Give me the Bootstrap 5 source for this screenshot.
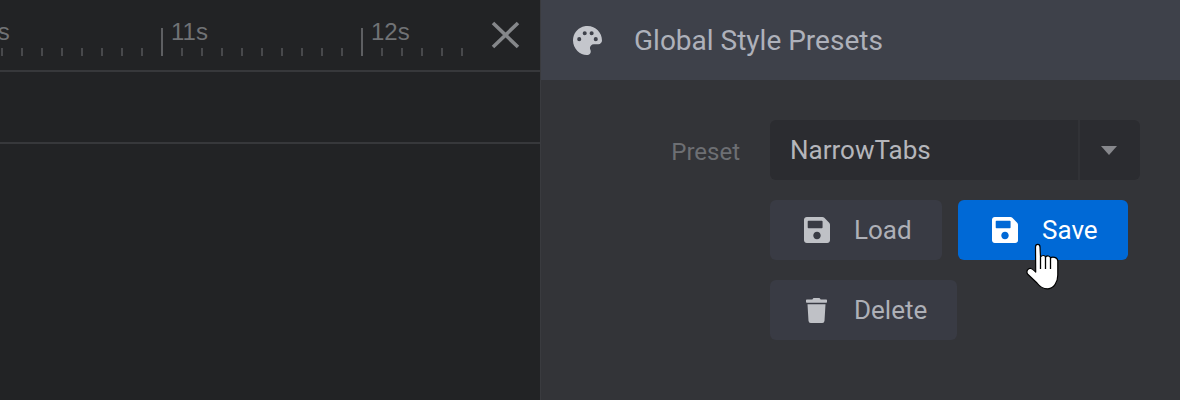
<!DOCTYPE html>
<html lang="en">
<head>
<meta charset="utf-8">
<title>Global Style Presets</title>
<link href="https://cdn.jsdelivr.net/npm/bootstrap@5.3.0/dist/css/bootstrap.min.css" rel="stylesheet">
<style>
html,body{margin:0;height:400px;overflow:hidden;background:#222325;font-family:Roboto,"Liberation Sans",sans-serif}
.stage{width:1180px;height:400px;position:relative;overflow:hidden}
.timeline{width:540px;height:400px;background:#222325;overflow:hidden}
.ruler{height:70px;position:relative;padding-right:20px}
.tick-row{margin-left:-39px;height:56px}
.tick{width:20px;flex:none;height:8px;border-left:2px solid #48494c;position:relative}
.tick.major{height:28px;border-left-color:#5e5f62}
.tick.major span{display:block;margin-left:8px;margin-top:-10px;font-family:"Liberation Sans",sans-serif;font-size:24px;line-height:28px;color:#707275;white-space:nowrap}
.close-x{position:absolute;left:491px;top:21px;width:29px;height:28px}
.track{height:72px;border-top:2px solid #37383b}
.sidebar{width:640px;height:400px;background:#333438;border-left:1px solid #3a3b3f}
.side-head{height:80px;background:#3e414a;padding-left:32px;color:#aeb1ba;font-size:28px}
.side-head svg{width:29px;height:29px;margin-right:32px}
.side-head span{padding-top:2px}
.form-rowish{padding:40px 40px 0 0}
.field-name{width:199px;text-align:right;margin-right:30px;color:#6d6f73;font-size:24px;line-height:60px;padding-top:2px}
.field-body{width:370px}
.preset-select{height:60px;background:#2b2c30;border-radius:6px;color:#b5b6bb;font-size:26px}
.preset-value{padding-left:20px;line-height:60px;width:308px}
.preset-caret{width:62px;border-left:2px solid #313236;padding-right:2px}
.preset-caret i{display:block;width:0;height:0;border-left:8px solid transparent;border-right:8px solid transparent;border-top:9px solid #87888c}
.act-grid{margin-top:20px;column-gap:16px;row-gap:20px}
.act-btn{height:60px;padding:0;border:0;border-radius:6px;background:#393b44;color:#aeb0b7;font-size:26px;line-height:60px;--bs-btn-hover-bg:#393b44;--bs-btn-hover-color:#aeb0b7}
.act-btn svg{fill:#bfc1c6;flex:none}
.act-load{width:172px}
.act-load svg,.act-save svg{width:26px;height:26px;margin:0 24px 0 34px}
.act-save{width:170px;background:#0069d6;color:#fff;--bs-btn-hover-bg:#0069d6;--bs-btn-hover-color:#fff}
.act-save svg{fill:#fff}
.act-del{width:187px}
.act-del svg{width:21px;height:25px;margin:0 27px 0 36px}
.hand{position:absolute;left:1020px;top:240px;width:50px;height:55px}
</style>
</head>
<body>
<div class="stage d-flex">
  <div class="timeline flex-none">
    <div class="ruler">
      <div class="tick-row d-flex align-items-end" id="ticks"></div>
      <svg class="close-x" viewBox="0 0 29 28"><path d="M2 2 27 26M27 2 2 26" stroke="#85878a" stroke-width="3.6" fill="none"/></svg>
    </div>
    <div class="track"></div>
    <div class="track"></div>
  </div>
  <div class="sidebar">
    <div class="side-head d-flex align-items-center">
      <svg viewBox="0 0 512 512"><path fill="#c4c6cc" fill-rule="evenodd" d="M204.3 5C104.9 24.4 24.8 104.3 5.2 203.4c-37 187 131.7 326.4 258.8 306.7 41.2-6.4 61.4-54.6 42.500-91.7-23.100-45.400 9.900-98.400 60.900-98.400h79.700c35.800 0 64.800-29.600 64.900-65.300C511.500 97.100 368.100-26.900 204.300 5zM74 232a36 36 0 1 0 72 0a36 36 0 1 0-72 0zM171 128a36 36 0 1 0 72 0a36 36 0 1 0-72 0zM293 128a36 36 0 1 0 72 0a36 36 0 1 0-72 0zM366 232a36 36 0 1 0 72 0a36 36 0 1 0-72 0z"/></svg>
      <span>Global Style Presets</span>
    </div>
    <div class="form-rowish d-flex">
      <div class="field-name">Preset</div>
      <div class="field-body">
        <div class="preset-select d-flex">
          <div class="preset-value">NarrowTabs</div>
          <div class="preset-caret d-flex align-items-center justify-content-center"><i></i></div>
        </div>
        <div class="act-grid d-flex flex-wrap">
          <button type="button" class="btn act-btn act-load d-flex align-items-center"><svg viewBox="0 32 448 448"><path d="M433.941 129.941l-83.882-83.882A48 48 0 0 0 316.118 32H48C21.49 32 0 53.49 0 80v352c0 26.51 21.49 48 48 48h352c26.51 0 48-21.49 48-48V163.882a48 48 0 0 0-14.059-33.941zM224 416c-35.346 0-64-28.654-64-64 0-35.346 28.654-64 64-64s64 28.654 64 64c0 35.346-28.654 64-64 64zm96-304.52V212c0 6.627-5.373 12-12 12H76c-6.627 0-12-5.373-12-12V108c0-6.627 5.373-12 12-12h228.52c3.183 0 6.235 1.264 8.485 3.515l3.48 3.48A11.996 11.996 0 0 1 320 111.48z"/></svg>Load</button>
          <button type="button" class="btn act-btn act-save d-flex align-items-center"><svg viewBox="0 32 448 448"><path d="M433.941 129.941l-83.882-83.882A48 48 0 0 0 316.118 32H48C21.49 32 0 53.49 0 80v352c0 26.51 21.49 48 48 48h352c26.51 0 48-21.49 48-48V163.882a48 48 0 0 0-14.059-33.941zM224 416c-35.346 0-64-28.654-64-64 0-35.346 28.654-64 64-64s64 28.654 64 64c0 35.346-28.654 64-64 64zm96-304.52V212c0 6.627-5.373 12-12 12H76c-6.627 0-12-5.373-12-12V108c0-6.627 5.373-12 12-12h228.52c3.183 0 6.235 1.264 8.485 3.515l3.48 3.48A11.996 11.996 0 0 1 320 111.48z"/></svg>Save</button>
          <button type="button" class="btn act-btn act-del d-flex align-items-center"><svg viewBox="0 0 448 512" preserveAspectRatio="none"><path d="M432 32H312l-9.4-18.7A24 24 0 0 0 281.1 0H166.8a23.72 23.72 0 0 0-21.4 13.3L136 32H16A16 16 0 0 0 0 48v32a16 16 0 0 0 16 16h416a16 16 0 0 0 16-16V48a16 16 0 0 0-16-16zM53.2 467a48 48 0 0 0 47.9 45h245.8a48 48 0 0 0 47.9-45L416 128H32z"/></svg>Delete</button>
        </div>
      </div>
    </div>
  </div>
  <svg class="hand" viewBox="20 240 50 55">
    <path d="M35.5 247C35.500 243.500 40 243.500 40 247L40.500 257C42 255 45 255 45.500 257C47 255.500 50 255.500 50.500 258C52 256.500 57.500 257 57.800 261L57.800 275C57.800 282 54 288.500 48 288.800C43 289 40 287 37 283L27.500 274C26 271 28 268 31 268.500C33 269 34.500 271 35.700 272Z" fill="#fff" stroke="#000" stroke-width="1.200" stroke-linejoin="round"/>
    <path d="M40.500 257V269M45.500 257V269M50.500 258V269" stroke="#000" stroke-width="1.300" fill="none"/>
  </svg>
</div>
<script src="https://cdn.jsdelivr.net/npm/bootstrap@5.3.0/dist/js/bootstrap.bundle.min.js"></script>
<script>
const row=document.getElementById('ticks');
for(let i=0;i<26;i++){
  const t=document.createElement('div');
  const major=i%10===0;
  t.className='tick'+(major?' major':'');
  if(major){const s=document.createElement('span');s.textContent=(10+i/10)+'s';t.appendChild(s);}
  row.appendChild(t);
}
</script>
</body>
</html>
